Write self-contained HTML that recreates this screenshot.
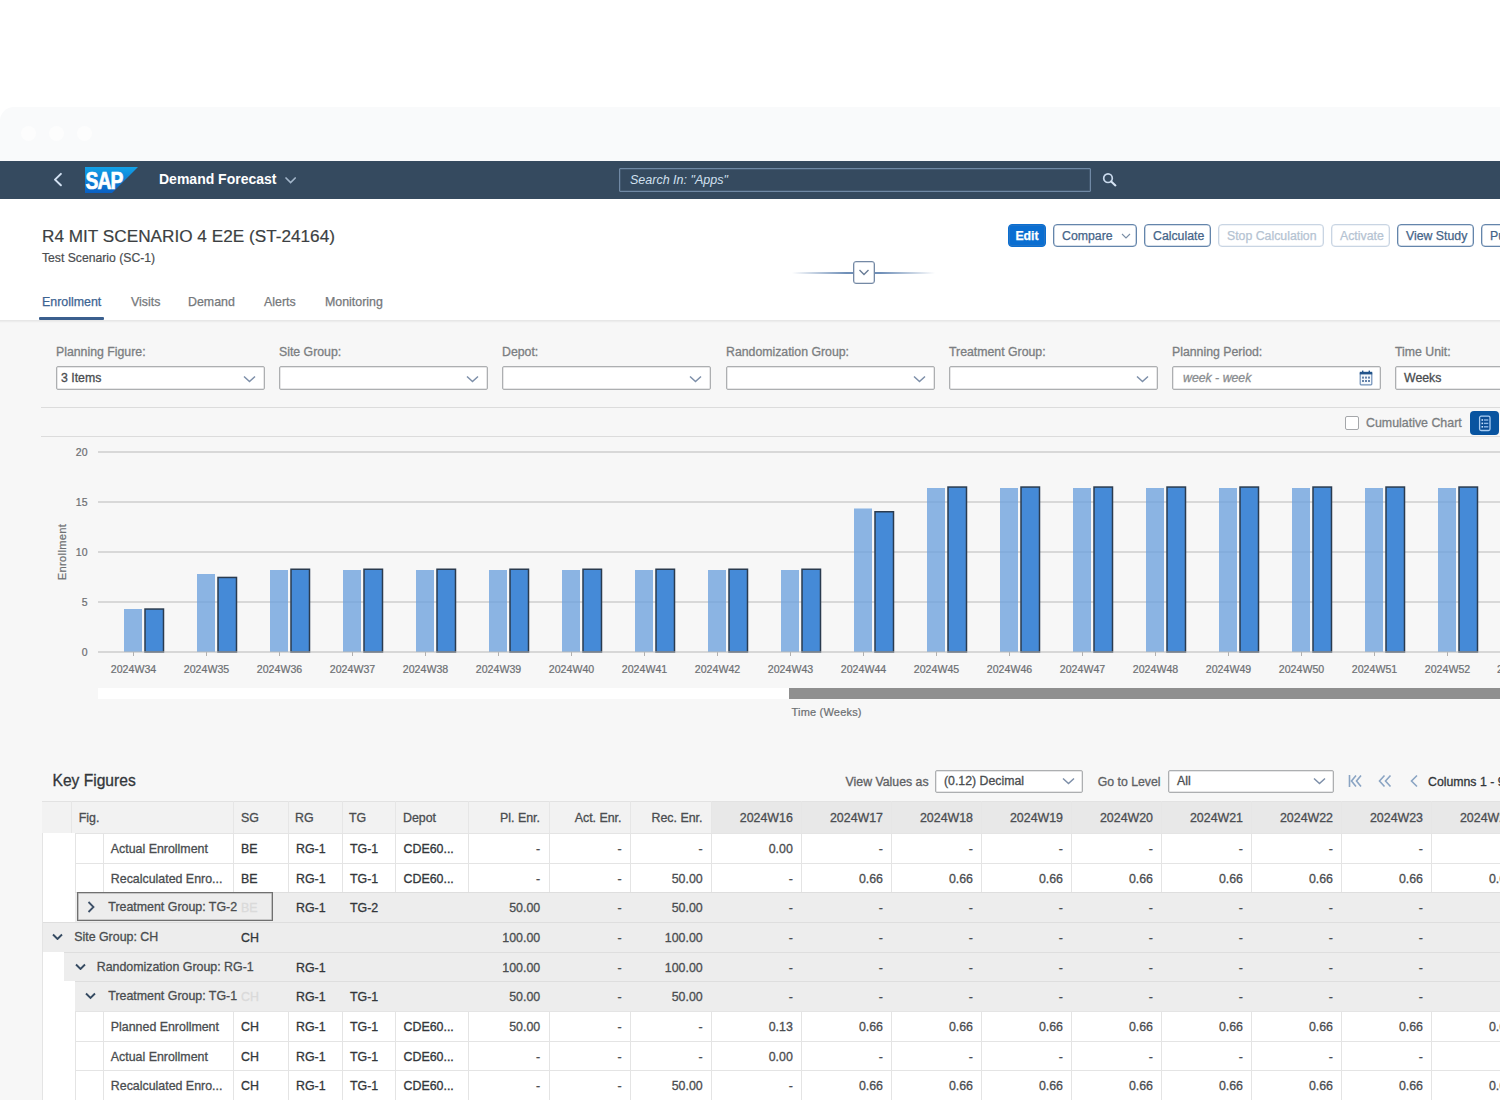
<!DOCTYPE html><html><head><meta charset="utf-8"><style>
*{box-sizing:border-box;margin:0;padding:0}
html,body{width:1500px;height:1100px;overflow:hidden;background:#fff;font-family:"Liberation Sans",sans-serif;color:#32363a}
.a{position:absolute;white-space:nowrap}
#chrome{position:absolute;left:0;top:107px;width:1520px;height:59px;background:#f9fafb;border-radius:14px 0 0 0}
.dot{position:absolute;top:126px;width:15px;height:15px;border-radius:50%;background:#fdfdfd}
#shell{position:absolute;left:0;top:161px;width:1500px;height:38px;background:#354a5f}
#hdr{position:absolute;left:0;top:199px;width:1500px;height:121px;background:#fff}
#body{position:absolute;left:0;top:320px;width:1500px;height:780px;background:#f7f7f7}
.btn{position:absolute;top:223.5px;height:23.5px;border:1px solid #6485ab;box-shadow:inset 0 0 0 0.6px rgba(100,133,171,.55);border-radius:4px;background:#fff;color:#456488;-webkit-text-stroke:0.25px currentColor;font-size:12.3px;line-height:23px;padding:0 0 0 8px;white-space:nowrap;overflow:hidden}
.btn.dis{border-color:#c9d5e3;box-shadow:inset 0 0 0 0.6px rgba(201,213,227,.55);color:#b5c3d2}
.lbl{position:absolute;top:345px;font-size:12.3px;color:#7b7e81;-webkit-text-stroke:0.3px currentColor;white-space:nowrap;line-height:14px}
.inp{position:absolute;top:366px;width:209px;height:23.5px;background:#fff;border:1px solid #adafb1;box-shadow:inset 0 0 0 0.5px rgba(173,175,177,.6);border-radius:2px;font-size:12.3px;line-height:22.5px;padding-left:4px;color:#4a4d50;-webkit-text-stroke:0.3px currentColor;white-space:nowrap;overflow:hidden}
.tab{position:absolute;top:294px;font-size:12.4px;color:#75787b;-webkit-text-stroke:0.25px currentColor;line-height:16px;white-space:nowrap}
.c{position:absolute;font-size:12.4px;line-height:16px;white-space:nowrap;color:#32363a}

</style></head><body>
<div id="chrome"></div>
<div class="dot" style="left:20.5px"></div>
<div class="dot" style="left:48.5px"></div>
<div class="dot" style="left:76.5px"></div>
<div id="shell"></div>
<svg class="a" style="left:50px;top:170px" width="16" height="20" viewBox="0 0 16 20"><path d="M10.9 3.9 L5 9.6 L10.9 15.3" fill="none" stroke="#d3e2f3" stroke-width="2" stroke-linecap="round" stroke-linejoin="round"/></svg>
<svg class="a" style="left:85px;top:167px" width="53" height="26" viewBox="0 0 53 26">
<defs><linearGradient id="sg" x1="0" y1="0" x2="0" y2="1"><stop offset="0" stop-color="#12a2e8"/><stop offset="1" stop-color="#0a5fc3"/></linearGradient></defs>
<path d="M0 0 H53 L27 26 H0 Z" fill="url(#sg)"/>
<text transform="translate(0.6,21.6) scale(0.84,1)" x="0" y="0" font-family="Liberation Sans" font-weight="bold" font-size="23" fill="#fff" stroke="#fff" stroke-width="0.7" letter-spacing="-1.1">SAP</text>
</svg>
<div class="a" style="left:159px;top:170px;font-size:14px;font-weight:bold;color:#fff;line-height:18px">Demand Forecast</div>
<svg class="a" style="left:284px;top:175px" width="14" height="10" viewBox="0 0 14 10"><path d="M2 3 L6.6 7.6 L11.2 3" fill="none" stroke="#a3b6ca" stroke-width="1.7" stroke-linecap="round"/></svg>
<div class="a" style="left:619px;top:168px;width:472px;height:24px;border:1px solid #7089a5;box-shadow:inset 0 0 0 0.5px rgba(112,137,165,.5);border-radius:1px"></div>
<div class="a" style="left:630px;top:172px;font-size:12.5px;font-style:italic;color:#d1e0ef;line-height:16px">Search In: "Apps"</div>
<svg class="a" style="left:1101px;top:172px" width="16" height="16" viewBox="0 0 16 16"><circle cx="7" cy="6.2" r="4.3" fill="none" stroke="#c9d9ec" stroke-width="1.7"/><path d="M10.2 9.4 L14.4 13.4" stroke="#d6e4f4" stroke-width="2.1" stroke-linecap="round"/></svg>
<div id="hdr"></div>
<div class="a" style="left:42px;top:226px;font-size:17.2px;color:#3c3f42;-webkit-text-stroke:0.2px currentColor;line-height:20px">R4 MIT SCENARIO 4 E2E (ST-24164)</div>
<div class="a" style="left:42px;top:251px;font-size:12.2px;color:#4a4d50;-webkit-text-stroke:0.2px currentColor;line-height:14px">Test Scenario (SC-1)</div>
<div class="btn" style="left:1008px;width:38px;background:#0a6ed1;border-color:#0a6ed1;color:#fff;font-weight:bold;padding:0;text-align:center">Edit</div>
<div class="btn" style="left:1053px;width:84px">Compare<svg style="position:absolute;left:67px;top:7px" width="10" height="8" viewBox="0 0 10 8"><path d="M1 2 L5 6 L9 2" fill="none" stroke="#7b8fa6" stroke-width="1.1"/></svg></div>
<div class="btn" style="left:1144px;width:67px">Calculate</div>
<div class="btn dis" style="left:1218px;width:106px">Stop Calculation</div>
<div class="btn dis" style="left:1331px;width:59px">Activate</div>
<div class="btn" style="left:1397px;width:77px">View Study</div>
<div class="btn" style="left:1481px;width:40px">Pu</div>
<div class="a" style="left:792px;top:272px;width:143px;height:1.5px;background:linear-gradient(90deg,rgba(106,140,180,0),#6f8fb8 38%,#6f8fb8 62%,rgba(106,140,180,0))"></div>
<div class="a" style="left:853px;top:261px;width:22px;height:23px;border:1px solid #7489a5;box-shadow:inset 0 0 0 0.6px rgba(116,137,165,.55);border-radius:3px;background:#fff"><svg style="position:absolute;left:4px;top:6px" width="12" height="9" viewBox="0 0 12 9"><path d="M1.5 2 L6 6.5 L10.5 2" fill="none" stroke="#6a7d97" stroke-width="1.4"/></svg></div>
<div class="tab" style="left:42px;color:#3d6492">Enrollment</div>
<div class="tab" style="left:131px">Visits</div>
<div class="tab" style="left:188px">Demand</div>
<div class="tab" style="left:264px">Alerts</div>
<div class="tab" style="left:325px">Monitoring</div>
<div class="a" style="left:39px;top:317px;width:65px;height:3px;background:#3b5f8e;border-radius:1px"></div>
<div id="body"></div>
<div class="a" style="left:0;top:320px;width:1500px;height:3px;background:linear-gradient(rgba(0,0,0,.08),rgba(0,0,0,0))"></div>
<div class="lbl" style="left:56px">Planning Figure:</div>
<div class="inp" style="left:56px">3 Items</div>
<svg class="a" style="left:243px;top:374.5px" width="13" height="8" viewBox="0 0 13 8"><path d="M1 1.5 L6.5 6.5 L12 1.5" fill="none" stroke="#7d8fa9" stroke-width="1.5"/></svg>
<div class="lbl" style="left:279px">Site Group:</div>
<div class="inp" style="left:279px"></div>
<svg class="a" style="left:466px;top:374.5px" width="13" height="8" viewBox="0 0 13 8"><path d="M1 1.5 L6.5 6.5 L12 1.5" fill="none" stroke="#7d8fa9" stroke-width="1.5"/></svg>
<div class="lbl" style="left:502px">Depot:</div>
<div class="inp" style="left:502px"></div>
<svg class="a" style="left:689px;top:374.5px" width="13" height="8" viewBox="0 0 13 8"><path d="M1 1.5 L6.5 6.5 L12 1.5" fill="none" stroke="#7d8fa9" stroke-width="1.5"/></svg>
<div class="lbl" style="left:726px">Randomization Group:</div>
<div class="inp" style="left:726px"></div>
<svg class="a" style="left:913px;top:374.5px" width="13" height="8" viewBox="0 0 13 8"><path d="M1 1.5 L6.5 6.5 L12 1.5" fill="none" stroke="#7d8fa9" stroke-width="1.5"/></svg>
<div class="lbl" style="left:949px">Treatment Group:</div>
<div class="inp" style="left:949px"></div>
<svg class="a" style="left:1136px;top:374.5px" width="13" height="8" viewBox="0 0 13 8"><path d="M1 1.5 L6.5 6.5 L12 1.5" fill="none" stroke="#7d8fa9" stroke-width="1.5"/></svg>
<div class="lbl" style="left:1172px">Planning Period:</div>
<div class="inp" style="left:1172px;font-style:italic;color:#8a8d90;padding-left:10px">week - week</div>
<svg class="a" style="left:1359px;top:370px" width="14" height="16" viewBox="0 0 14 16"><rect x="1.2" y="2.5" width="11.6" height="12.3" rx="0.8" fill="#f4f8fc" stroke="#6f90b8" stroke-width="1.2"/><rect x="0.8" y="1.8" width="12.4" height="2.6" fill="#22548b"/><rect x="3" y="0.6" width="1.4" height="2" fill="#22548b"/><rect x="9.6" y="0.6" width="1.4" height="2" fill="#22548b"/><g fill="#6583aa"><rect x="3" y="6.6" width="2" height="2"/><rect x="6" y="6.6" width="2" height="2"/><rect x="9" y="6.6" width="2" height="2"/><rect x="3" y="10" width="2" height="2"/><rect x="6" y="10" width="2" height="2"/><rect x="9" y="10" width="2" height="2"/></g></svg>
<div class="lbl" style="left:1395px">Time Unit:</div>
<div class="inp" style="left:1395px;width:140px;padding-left:8px">Weeks</div>
<div class="a" style="left:41px;top:407px;width:1460px;height:1px;background:#dcdcdc"></div>
<div class="a" style="left:41px;top:436px;width:1460px;height:1px;background:#dcdcdc"></div>
<div class="a" style="left:1345px;top:416px;width:14px;height:14px;border:1px solid #a5a7aa;border-radius:2px;background:#fff"></div>
<div class="a" style="left:1366px;top:415px;font-size:12.4px;color:#7b7e81;-webkit-text-stroke:0.3px currentColor;line-height:16px">Cumulative Chart</div>
<div class="a" style="left:1470px;top:411px;width:29px;height:23.5px;background:#0854a0;border-radius:4px"><svg style="position:absolute;left:8px;top:3.5px" width="14" height="17" viewBox="0 0 14 17"><rect x="1.6" y="1.2" width="10.4" height="14.3" rx="1.5" fill="#0a4c94" stroke="#a9cdf3" stroke-width="1.3"/><g fill="#cfe6ff"><rect x="3.5" y="4.2" width="1.6" height="1.6"/><rect x="3.5" y="7.6" width="1.6" height="1.6"/><rect x="3.5" y="11" width="1.6" height="1.6"/></g><g fill="#8fb9e8"><rect x="6" y="4.3" width="4.3" height="1.4"/><rect x="6" y="7.7" width="4.3" height="1.4"/><rect x="6" y="11.1" width="4.3" height="1.4"/></g></svg></div>
<svg class="a" style="left:0;top:440px" width="1500" height="290" viewBox="0 440 1500 290"><rect x="98" y="451.25" width="1402" height="1.5" fill="#cecece"/><text x="87.5" y="455.8" text-anchor="end" font-family="Liberation Sans" font-size="10.5" fill="#6d7073" stroke="#6d7073" stroke-width="0.22">20</text><rect x="98" y="501.25" width="1402" height="1.5" fill="#cecece"/><text x="87.5" y="505.8" text-anchor="end" font-family="Liberation Sans" font-size="10.5" fill="#6d7073" stroke="#6d7073" stroke-width="0.22">15</text><rect x="98" y="551.25" width="1402" height="1.5" fill="#cecece"/><text x="87.5" y="555.8" text-anchor="end" font-family="Liberation Sans" font-size="10.5" fill="#6d7073" stroke="#6d7073" stroke-width="0.22">10</text><rect x="98" y="601.25" width="1402" height="1.5" fill="#cecece"/><text x="87.5" y="605.8" text-anchor="end" font-family="Liberation Sans" font-size="10.5" fill="#6d7073" stroke="#6d7073" stroke-width="0.22">5</text><text x="87.5" y="655.8" text-anchor="end" font-family="Liberation Sans" font-size="10.5" fill="#6d7073" stroke="#6d7073" stroke-width="0.22">0</text><rect x="124" y="609.0" width="18" height="43.0" fill="#6fa3dd" fill-opacity="0.8"/><rect x="145" y="609.05" width="18.5" height="42.95" fill="#458ad7" stroke="#2a3b4f" stroke-width="1.5"/><rect x="133" y="652" width="1" height="4" fill="#b0b0b0"/><text x="133.5" y="673" text-anchor="middle" font-family="Liberation Sans" font-size="10.6" fill="#6d7073" stroke="#6d7073" stroke-width="0.22">2024W34</text><rect x="197" y="574.0" width="18" height="78.0" fill="#6fa3dd" fill-opacity="0.8"/><rect x="218" y="577.45" width="18.5" height="74.55" fill="#458ad7" stroke="#2a3b4f" stroke-width="1.5"/><rect x="206" y="652" width="1" height="4" fill="#b0b0b0"/><text x="206.5" y="673" text-anchor="middle" font-family="Liberation Sans" font-size="10.6" fill="#6d7073" stroke="#6d7073" stroke-width="0.22">2024W35</text><rect x="270" y="570.0" width="18" height="82.0" fill="#6fa3dd" fill-opacity="0.8"/><rect x="291" y="569.25" width="18.5" height="82.75" fill="#458ad7" stroke="#2a3b4f" stroke-width="1.5"/><rect x="279" y="652" width="1" height="4" fill="#b0b0b0"/><text x="279.5" y="673" text-anchor="middle" font-family="Liberation Sans" font-size="10.6" fill="#6d7073" stroke="#6d7073" stroke-width="0.22">2024W36</text><rect x="343" y="570.0" width="18" height="82.0" fill="#6fa3dd" fill-opacity="0.8"/><rect x="364" y="569.25" width="18.5" height="82.75" fill="#458ad7" stroke="#2a3b4f" stroke-width="1.5"/><rect x="352" y="652" width="1" height="4" fill="#b0b0b0"/><text x="352.5" y="673" text-anchor="middle" font-family="Liberation Sans" font-size="10.6" fill="#6d7073" stroke="#6d7073" stroke-width="0.22">2024W37</text><rect x="416" y="570.0" width="18" height="82.0" fill="#6fa3dd" fill-opacity="0.8"/><rect x="437" y="569.25" width="18.5" height="82.75" fill="#458ad7" stroke="#2a3b4f" stroke-width="1.5"/><rect x="425" y="652" width="1" height="4" fill="#b0b0b0"/><text x="425.5" y="673" text-anchor="middle" font-family="Liberation Sans" font-size="10.6" fill="#6d7073" stroke="#6d7073" stroke-width="0.22">2024W38</text><rect x="489" y="570.0" width="18" height="82.0" fill="#6fa3dd" fill-opacity="0.8"/><rect x="510" y="569.25" width="18.5" height="82.75" fill="#458ad7" stroke="#2a3b4f" stroke-width="1.5"/><rect x="498" y="652" width="1" height="4" fill="#b0b0b0"/><text x="498.5" y="673" text-anchor="middle" font-family="Liberation Sans" font-size="10.6" fill="#6d7073" stroke="#6d7073" stroke-width="0.22">2024W39</text><rect x="562" y="570.0" width="18" height="82.0" fill="#6fa3dd" fill-opacity="0.8"/><rect x="583" y="569.25" width="18.5" height="82.75" fill="#458ad7" stroke="#2a3b4f" stroke-width="1.5"/><rect x="571" y="652" width="1" height="4" fill="#b0b0b0"/><text x="571.5" y="673" text-anchor="middle" font-family="Liberation Sans" font-size="10.6" fill="#6d7073" stroke="#6d7073" stroke-width="0.22">2024W40</text><rect x="635" y="570.0" width="18" height="82.0" fill="#6fa3dd" fill-opacity="0.8"/><rect x="656" y="569.25" width="18.5" height="82.75" fill="#458ad7" stroke="#2a3b4f" stroke-width="1.5"/><rect x="644" y="652" width="1" height="4" fill="#b0b0b0"/><text x="644.5" y="673" text-anchor="middle" font-family="Liberation Sans" font-size="10.6" fill="#6d7073" stroke="#6d7073" stroke-width="0.22">2024W41</text><rect x="708" y="570.0" width="18" height="82.0" fill="#6fa3dd" fill-opacity="0.8"/><rect x="729" y="569.25" width="18.5" height="82.75" fill="#458ad7" stroke="#2a3b4f" stroke-width="1.5"/><rect x="717" y="652" width="1" height="4" fill="#b0b0b0"/><text x="717.5" y="673" text-anchor="middle" font-family="Liberation Sans" font-size="10.6" fill="#6d7073" stroke="#6d7073" stroke-width="0.22">2024W42</text><rect x="781" y="570.0" width="18" height="82.0" fill="#6fa3dd" fill-opacity="0.8"/><rect x="802" y="569.25" width="18.5" height="82.75" fill="#458ad7" stroke="#2a3b4f" stroke-width="1.5"/><rect x="790" y="652" width="1" height="4" fill="#b0b0b0"/><text x="790.5" y="673" text-anchor="middle" font-family="Liberation Sans" font-size="10.6" fill="#6d7073" stroke="#6d7073" stroke-width="0.22">2024W43</text><rect x="854" y="508.5" width="18" height="143.5" fill="#6fa3dd" fill-opacity="0.8"/><rect x="875" y="511.75" width="18.5" height="140.25" fill="#458ad7" stroke="#2a3b4f" stroke-width="1.5"/><rect x="863" y="652" width="1" height="4" fill="#b0b0b0"/><text x="863.5" y="673" text-anchor="middle" font-family="Liberation Sans" font-size="10.6" fill="#6d7073" stroke="#6d7073" stroke-width="0.22">2024W44</text><rect x="927" y="488.0" width="18" height="164.0" fill="#6fa3dd" fill-opacity="0.8"/><rect x="948" y="487.05" width="18.5" height="164.95" fill="#458ad7" stroke="#2a3b4f" stroke-width="1.5"/><rect x="936" y="652" width="1" height="4" fill="#b0b0b0"/><text x="936.5" y="673" text-anchor="middle" font-family="Liberation Sans" font-size="10.6" fill="#6d7073" stroke="#6d7073" stroke-width="0.22">2024W45</text><rect x="1000" y="488.0" width="18" height="164.0" fill="#6fa3dd" fill-opacity="0.8"/><rect x="1021" y="487.05" width="18.5" height="164.95" fill="#458ad7" stroke="#2a3b4f" stroke-width="1.5"/><rect x="1009" y="652" width="1" height="4" fill="#b0b0b0"/><text x="1009.5" y="673" text-anchor="middle" font-family="Liberation Sans" font-size="10.6" fill="#6d7073" stroke="#6d7073" stroke-width="0.22">2024W46</text><rect x="1073" y="488.0" width="18" height="164.0" fill="#6fa3dd" fill-opacity="0.8"/><rect x="1094" y="487.05" width="18.5" height="164.95" fill="#458ad7" stroke="#2a3b4f" stroke-width="1.5"/><rect x="1082" y="652" width="1" height="4" fill="#b0b0b0"/><text x="1082.5" y="673" text-anchor="middle" font-family="Liberation Sans" font-size="10.6" fill="#6d7073" stroke="#6d7073" stroke-width="0.22">2024W47</text><rect x="1146" y="488.0" width="18" height="164.0" fill="#6fa3dd" fill-opacity="0.8"/><rect x="1167" y="487.05" width="18.5" height="164.95" fill="#458ad7" stroke="#2a3b4f" stroke-width="1.5"/><rect x="1155" y="652" width="1" height="4" fill="#b0b0b0"/><text x="1155.5" y="673" text-anchor="middle" font-family="Liberation Sans" font-size="10.6" fill="#6d7073" stroke="#6d7073" stroke-width="0.22">2024W48</text><rect x="1219" y="488.0" width="18" height="164.0" fill="#6fa3dd" fill-opacity="0.8"/><rect x="1240" y="487.05" width="18.5" height="164.95" fill="#458ad7" stroke="#2a3b4f" stroke-width="1.5"/><rect x="1228" y="652" width="1" height="4" fill="#b0b0b0"/><text x="1228.5" y="673" text-anchor="middle" font-family="Liberation Sans" font-size="10.6" fill="#6d7073" stroke="#6d7073" stroke-width="0.22">2024W49</text><rect x="1292" y="488.0" width="18" height="164.0" fill="#6fa3dd" fill-opacity="0.8"/><rect x="1313" y="487.05" width="18.5" height="164.95" fill="#458ad7" stroke="#2a3b4f" stroke-width="1.5"/><rect x="1301" y="652" width="1" height="4" fill="#b0b0b0"/><text x="1301.5" y="673" text-anchor="middle" font-family="Liberation Sans" font-size="10.6" fill="#6d7073" stroke="#6d7073" stroke-width="0.22">2024W50</text><rect x="1365" y="488.0" width="18" height="164.0" fill="#6fa3dd" fill-opacity="0.8"/><rect x="1386" y="487.05" width="18.5" height="164.95" fill="#458ad7" stroke="#2a3b4f" stroke-width="1.5"/><rect x="1374" y="652" width="1" height="4" fill="#b0b0b0"/><text x="1374.5" y="673" text-anchor="middle" font-family="Liberation Sans" font-size="10.6" fill="#6d7073" stroke="#6d7073" stroke-width="0.22">2024W51</text><rect x="1438" y="488.0" width="18" height="164.0" fill="#6fa3dd" fill-opacity="0.8"/><rect x="1459" y="487.05" width="18.5" height="164.95" fill="#458ad7" stroke="#2a3b4f" stroke-width="1.5"/><rect x="1447" y="652" width="1" height="4" fill="#b0b0b0"/><text x="1447.5" y="673" text-anchor="middle" font-family="Liberation Sans" font-size="10.6" fill="#6d7073" stroke="#6d7073" stroke-width="0.22">2024W52</text><text x="1497" y="673" font-family="Liberation Sans" font-size="10.6" fill="#6d7073" stroke="#6d7073" stroke-width="0.22">2</text><rect x="98" y="651.5" width="1402" height="1" fill="#b8b8b8"/><rect x="98" y="688" width="1402" height="11" fill="#ffffff"/><rect x="789" y="688" width="711" height="11" fill="#8f8f8f"/><text x="791.5" y="716" font-family="Liberation Sans" font-size="11" fill="#6d7073" stroke="#6d7073" stroke-width="0.22" letter-spacing="0.2">Time (Weeks)</text><text transform="translate(66,552) rotate(-90)" text-anchor="middle" font-family="Liberation Sans" font-size="11.2" fill="#6d7073" stroke="#6d7073" stroke-width="0.22" letter-spacing="0.3">Enrollment</text></svg>
<div class="a" style="left:52.50px;top:773.09px;font-size:15.6px;line-height:16px;color:#32363a;-webkit-text-stroke:0.3px currentColor">Key Figures</div>
<div class="a" style="left:845.60px;top:773.74px;font-size:12.3px;line-height:16px;color:#5e6164;-webkit-text-stroke:0.3px currentColor">View Values as</div>
<div class="inp" style="left:935px;top:770px;width:148px;height:23px;padding-left:8px;line-height:21px">(0.12) Decimal</div>
<svg class="a" style="left:1062px;top:777px" width="13" height="8" viewBox="0 0 13 8"><path d="M1 1.5 L6.5 6.5 L12 1.5" fill="none" stroke="#7d8fa9" stroke-width="1.5"/></svg>
<div class="a" style="left:1097.70px;top:773.74px;font-size:12.3px;line-height:16px;color:#5e6164;-webkit-text-stroke:0.3px currentColor">Go to Level</div>
<div class="inp" style="left:1168px;top:770px;width:166px;height:23px;padding-left:8px;line-height:21px">All</div>
<svg class="a" style="left:1313px;top:777px" width="13" height="8" viewBox="0 0 13 8"><path d="M1 1.5 L6.5 6.5 L12 1.5" fill="none" stroke="#7d8fa9" stroke-width="1.5"/></svg>
<svg class="a" style="left:1348px;top:774px" width="16" height="14" viewBox="0 0 16 14"><path d="M1.5 1 V13 M8 1.5 L3.5 7 L8 12.5 M13 1.5 L8.5 7 L13 12.5" fill="none" stroke="#8aa4c3" stroke-width="1.6"/></svg>
<svg class="a" style="left:1377px;top:774px" width="16" height="14" viewBox="0 0 16 14"><path d="M7.5 1.5 L2.5 7 L7.5 12.5 M13.5 1.5 L8.5 7 L13.5 12.5" fill="none" stroke="#8aa4c3" stroke-width="1.6"/></svg>
<svg class="a" style="left:1408px;top:774px" width="12" height="14" viewBox="0 0 12 14"><path d="M9 1.5 L3.5 7 L9 12.5" fill="none" stroke="#8aa4c3" stroke-width="1.6"/></svg>
<div class="a" style="left:1428.00px;top:773.74px;font-size:12.3px;line-height:16px;color:#32363a;-webkit-text-stroke:0.3px currentColor">Columns 1 - 9</div>
<div class="a" style="left:41.7px;top:801px;width:1458.3px;height:31.5px;background:#f2f2f2;"></div>
<div class="a" style="left:711px;top:801px;width:790px;height:31.5px;background:#e8e8e8;"></div>
<div class="a" style="left:41.7px;top:801px;width:1458.3px;height:1px;background:#e2e2e2;"></div>
<div class="a" style="left:71px;top:801px;width:1px;height:31.5px;background:#e6e6e6;"></div>
<div class="a" style="left:232.5px;top:801px;width:1px;height:31.5px;background:#e6e6e6;"></div>
<div class="a" style="left:287.5px;top:801px;width:1px;height:31.5px;background:#e6e6e6;"></div>
<div class="a" style="left:341.5px;top:801px;width:1px;height:31.5px;background:#e6e6e6;"></div>
<div class="a" style="left:395px;top:801px;width:1px;height:31.5px;background:#e6e6e6;"></div>
<div class="a" style="left:467.5px;top:801px;width:1px;height:31.5px;background:#e6e6e6;"></div>
<div class="a" style="left:548.5px;top:801px;width:1px;height:31.5px;background:#e6e6e6;"></div>
<div class="a" style="left:630px;top:801px;width:1px;height:31.5px;background:#e6e6e6;"></div>
<div class="a" style="left:711px;top:801px;width:1px;height:31.5px;background:#e6e6e6;"></div>
<div class="a" style="left:800.8px;top:801px;width:1px;height:31.5px;background:#e6e6e6;"></div>
<div class="a" style="left:891px;top:801px;width:1px;height:31.5px;background:#e6e6e6;"></div>
<div class="a" style="left:981px;top:801px;width:1px;height:31.5px;background:#e6e6e6;"></div>
<div class="a" style="left:1071px;top:801px;width:1px;height:31.5px;background:#e6e6e6;"></div>
<div class="a" style="left:1161px;top:801px;width:1px;height:31.5px;background:#e6e6e6;"></div>
<div class="a" style="left:1251px;top:801px;width:1px;height:31.5px;background:#e6e6e6;"></div>
<div class="a" style="left:1341px;top:801px;width:1px;height:31.5px;background:#e6e6e6;"></div>
<div class="a" style="left:1431px;top:801px;width:1px;height:31.5px;background:#e6e6e6;"></div>
<div class="a" style="left:78.70px;top:810.20px;font-size:12.4px;line-height:16px;color:#4a4d50;-webkit-text-stroke:0.3px currentColor">Fig.</div>
<div class="a" style="left:241.00px;top:810.20px;font-size:12.4px;line-height:16px;color:#4a4d50;-webkit-text-stroke:0.3px currentColor">SG</div>
<div class="a" style="left:295.00px;top:810.20px;font-size:12.4px;line-height:16px;color:#4a4d50;-webkit-text-stroke:0.3px currentColor">RG</div>
<div class="a" style="left:349.00px;top:810.20px;font-size:12.4px;line-height:16px;color:#4a4d50;-webkit-text-stroke:0.3px currentColor">TG</div>
<div class="a" style="left:403.00px;top:810.20px;font-size:12.4px;line-height:16px;color:#4a4d50;-webkit-text-stroke:0.3px currentColor">Depot</div>
<div class="a" style="right:960.00px;top:810.20px;font-size:12.4px;line-height:16px;color:#4a4d50;-webkit-text-stroke:0.3px currentColor">Pl. Enr.</div>
<div class="a" style="right:878.50px;top:810.20px;font-size:12.4px;line-height:16px;color:#4a4d50;-webkit-text-stroke:0.3px currentColor">Act. Enr.</div>
<div class="a" style="right:797.50px;top:810.20px;font-size:12.4px;line-height:16px;color:#4a4d50;-webkit-text-stroke:0.3px currentColor">Rec. Enr.</div>
<div class="a" style="right:707.20px;top:810.20px;font-size:12.4px;line-height:16px;color:#4a4d50;-webkit-text-stroke:0.3px currentColor">2024W16</div>
<div class="a" style="right:617.00px;top:810.20px;font-size:12.4px;line-height:16px;color:#4a4d50;-webkit-text-stroke:0.3px currentColor">2024W17</div>
<div class="a" style="right:527.00px;top:810.20px;font-size:12.4px;line-height:16px;color:#4a4d50;-webkit-text-stroke:0.3px currentColor">2024W18</div>
<div class="a" style="right:437.00px;top:810.20px;font-size:12.4px;line-height:16px;color:#4a4d50;-webkit-text-stroke:0.3px currentColor">2024W19</div>
<div class="a" style="right:347.00px;top:810.20px;font-size:12.4px;line-height:16px;color:#4a4d50;-webkit-text-stroke:0.3px currentColor">2024W20</div>
<div class="a" style="right:257.00px;top:810.20px;font-size:12.4px;line-height:16px;color:#4a4d50;-webkit-text-stroke:0.3px currentColor">2024W21</div>
<div class="a" style="right:167.00px;top:810.20px;font-size:12.4px;line-height:16px;color:#4a4d50;-webkit-text-stroke:0.3px currentColor">2024W22</div>
<div class="a" style="right:77.00px;top:810.20px;font-size:12.4px;line-height:16px;color:#4a4d50;-webkit-text-stroke:0.3px currentColor">2024W23</div>
<div class="a" style="right:-13.00px;top:810.20px;font-size:12.4px;line-height:16px;color:#4a4d50;-webkit-text-stroke:0.3px currentColor">2024W24</div>
<div class="a" style="left:41.7px;top:832.5px;width:1458.3px;height:267.5px;background:#ffffff;"></div>
<div class="a" style="left:75px;top:832.5px;width:1425px;height:1px;background:#e4e4e4;"></div>
<div class="a" style="left:75px;top:832.5px;width:1px;height:30.0px;background:#e4e4e4;"></div>
<div class="a" style="left:103.3px;top:832.5px;width:1px;height:30.0px;background:#e4e4e4;"></div>
<div class="a" style="left:232.5px;top:832.5px;width:1px;height:30.0px;background:#e4e4e4;"></div>
<div class="a" style="left:287.5px;top:832.5px;width:1px;height:30.0px;background:#e4e4e4;"></div>
<div class="a" style="left:341.5px;top:832.5px;width:1px;height:30.0px;background:#e4e4e4;"></div>
<div class="a" style="left:395px;top:832.5px;width:1px;height:30.0px;background:#e4e4e4;"></div>
<div class="a" style="left:467.5px;top:832.5px;width:1px;height:30.0px;background:#e4e4e4;"></div>
<div class="a" style="left:548.5px;top:832.5px;width:1px;height:30.0px;background:#e4e4e4;"></div>
<div class="a" style="left:630px;top:832.5px;width:1px;height:30.0px;background:#e4e4e4;"></div>
<div class="a" style="left:711px;top:832.5px;width:1px;height:30.0px;background:#e4e4e4;"></div>
<div class="a" style="left:800.8px;top:832.5px;width:1px;height:30.0px;background:#e4e4e4;"></div>
<div class="a" style="left:891px;top:832.5px;width:1px;height:30.0px;background:#e4e4e4;"></div>
<div class="a" style="left:981px;top:832.5px;width:1px;height:30.0px;background:#e4e4e4;"></div>
<div class="a" style="left:1071px;top:832.5px;width:1px;height:30.0px;background:#e4e4e4;"></div>
<div class="a" style="left:1161px;top:832.5px;width:1px;height:30.0px;background:#e4e4e4;"></div>
<div class="a" style="left:1251px;top:832.5px;width:1px;height:30.0px;background:#e4e4e4;"></div>
<div class="a" style="left:1341px;top:832.5px;width:1px;height:30.0px;background:#e4e4e4;"></div>
<div class="a" style="left:1431px;top:832.5px;width:1px;height:30.0px;background:#e4e4e4;"></div>
<div class="a" style="left:110.80px;top:840.70px;font-size:12.4px;line-height:16px;color:#4a4d50;-webkit-text-stroke:0.3px currentColor">Actual Enrollment</div>
<div class="a" style="left:241.00px;top:840.70px;font-size:12.4px;line-height:16px;color:#32363a;-webkit-text-stroke:0.3px currentColor">BE</div>
<div class="a" style="left:296.00px;top:840.70px;font-size:12.4px;line-height:16px;color:#32363a;-webkit-text-stroke:0.3px currentColor">RG-1</div>
<div class="a" style="left:350.00px;top:840.70px;font-size:12.4px;line-height:16px;color:#32363a;-webkit-text-stroke:0.3px currentColor">TG-1</div>
<div class="a" style="left:403.50px;top:840.70px;font-size:12.4px;line-height:16px;color:#32363a;-webkit-text-stroke:0.3px currentColor">CDE60...</div>
<div class="a" style="right:959.80px;top:840.70px;font-size:12.4px;line-height:16px;color:#4a4d50;-webkit-text-stroke:0.3px currentColor">-</div>
<div class="a" style="right:878.30px;top:840.70px;font-size:12.4px;line-height:16px;color:#4a4d50;-webkit-text-stroke:0.3px currentColor">-</div>
<div class="a" style="right:797.30px;top:840.70px;font-size:12.4px;line-height:16px;color:#4a4d50;-webkit-text-stroke:0.3px currentColor">-</div>
<div class="a" style="right:707.20px;top:840.70px;font-size:12.4px;line-height:16px;color:#4a4d50;-webkit-text-stroke:0.3px currentColor">0.00</div>
<div class="a" style="right:617.00px;top:840.70px;font-size:12.4px;line-height:16px;color:#4a4d50;-webkit-text-stroke:0.3px currentColor">-</div>
<div class="a" style="right:527.00px;top:840.70px;font-size:12.4px;line-height:16px;color:#4a4d50;-webkit-text-stroke:0.3px currentColor">-</div>
<div class="a" style="right:437.00px;top:840.70px;font-size:12.4px;line-height:16px;color:#4a4d50;-webkit-text-stroke:0.3px currentColor">-</div>
<div class="a" style="right:347.00px;top:840.70px;font-size:12.4px;line-height:16px;color:#4a4d50;-webkit-text-stroke:0.3px currentColor">-</div>
<div class="a" style="right:257.00px;top:840.70px;font-size:12.4px;line-height:16px;color:#4a4d50;-webkit-text-stroke:0.3px currentColor">-</div>
<div class="a" style="right:167.00px;top:840.70px;font-size:12.4px;line-height:16px;color:#4a4d50;-webkit-text-stroke:0.3px currentColor">-</div>
<div class="a" style="right:77.00px;top:840.70px;font-size:12.4px;line-height:16px;color:#4a4d50;-webkit-text-stroke:0.3px currentColor">-</div>
<div class="a" style="left:75px;top:862.5px;width:1425px;height:1px;background:#e4e4e4;"></div>
<div class="a" style="left:75px;top:862.5px;width:1px;height:29.5px;background:#e4e4e4;"></div>
<div class="a" style="left:103.3px;top:862.5px;width:1px;height:29.5px;background:#e4e4e4;"></div>
<div class="a" style="left:232.5px;top:862.5px;width:1px;height:29.5px;background:#e4e4e4;"></div>
<div class="a" style="left:287.5px;top:862.5px;width:1px;height:29.5px;background:#e4e4e4;"></div>
<div class="a" style="left:341.5px;top:862.5px;width:1px;height:29.5px;background:#e4e4e4;"></div>
<div class="a" style="left:395px;top:862.5px;width:1px;height:29.5px;background:#e4e4e4;"></div>
<div class="a" style="left:467.5px;top:862.5px;width:1px;height:29.5px;background:#e4e4e4;"></div>
<div class="a" style="left:548.5px;top:862.5px;width:1px;height:29.5px;background:#e4e4e4;"></div>
<div class="a" style="left:630px;top:862.5px;width:1px;height:29.5px;background:#e4e4e4;"></div>
<div class="a" style="left:711px;top:862.5px;width:1px;height:29.5px;background:#e4e4e4;"></div>
<div class="a" style="left:800.8px;top:862.5px;width:1px;height:29.5px;background:#e4e4e4;"></div>
<div class="a" style="left:891px;top:862.5px;width:1px;height:29.5px;background:#e4e4e4;"></div>
<div class="a" style="left:981px;top:862.5px;width:1px;height:29.5px;background:#e4e4e4;"></div>
<div class="a" style="left:1071px;top:862.5px;width:1px;height:29.5px;background:#e4e4e4;"></div>
<div class="a" style="left:1161px;top:862.5px;width:1px;height:29.5px;background:#e4e4e4;"></div>
<div class="a" style="left:1251px;top:862.5px;width:1px;height:29.5px;background:#e4e4e4;"></div>
<div class="a" style="left:1341px;top:862.5px;width:1px;height:29.5px;background:#e4e4e4;"></div>
<div class="a" style="left:1431px;top:862.5px;width:1px;height:29.5px;background:#e4e4e4;"></div>
<div class="a" style="left:110.80px;top:870.70px;font-size:12.4px;line-height:16px;color:#4a4d50;-webkit-text-stroke:0.3px currentColor">Recalculated Enro...</div>
<div class="a" style="left:241.00px;top:870.70px;font-size:12.4px;line-height:16px;color:#32363a;-webkit-text-stroke:0.3px currentColor">BE</div>
<div class="a" style="left:296.00px;top:870.70px;font-size:12.4px;line-height:16px;color:#32363a;-webkit-text-stroke:0.3px currentColor">RG-1</div>
<div class="a" style="left:350.00px;top:870.70px;font-size:12.4px;line-height:16px;color:#32363a;-webkit-text-stroke:0.3px currentColor">TG-1</div>
<div class="a" style="left:403.50px;top:870.70px;font-size:12.4px;line-height:16px;color:#32363a;-webkit-text-stroke:0.3px currentColor">CDE60...</div>
<div class="a" style="right:959.80px;top:870.70px;font-size:12.4px;line-height:16px;color:#4a4d50;-webkit-text-stroke:0.3px currentColor">-</div>
<div class="a" style="right:878.30px;top:870.70px;font-size:12.4px;line-height:16px;color:#4a4d50;-webkit-text-stroke:0.3px currentColor">-</div>
<div class="a" style="right:797.30px;top:870.70px;font-size:12.4px;line-height:16px;color:#4a4d50;-webkit-text-stroke:0.3px currentColor">50.00</div>
<div class="a" style="right:707.20px;top:870.70px;font-size:12.4px;line-height:16px;color:#4a4d50;-webkit-text-stroke:0.3px currentColor">-</div>
<div class="a" style="right:617.00px;top:870.70px;font-size:12.4px;line-height:16px;color:#4a4d50;-webkit-text-stroke:0.3px currentColor">0.66</div>
<div class="a" style="right:527.00px;top:870.70px;font-size:12.4px;line-height:16px;color:#4a4d50;-webkit-text-stroke:0.3px currentColor">0.66</div>
<div class="a" style="right:437.00px;top:870.70px;font-size:12.4px;line-height:16px;color:#4a4d50;-webkit-text-stroke:0.3px currentColor">0.66</div>
<div class="a" style="right:347.00px;top:870.70px;font-size:12.4px;line-height:16px;color:#4a4d50;-webkit-text-stroke:0.3px currentColor">0.66</div>
<div class="a" style="right:257.00px;top:870.70px;font-size:12.4px;line-height:16px;color:#4a4d50;-webkit-text-stroke:0.3px currentColor">0.66</div>
<div class="a" style="right:167.00px;top:870.70px;font-size:12.4px;line-height:16px;color:#4a4d50;-webkit-text-stroke:0.3px currentColor">0.66</div>
<div class="a" style="right:77.00px;top:870.70px;font-size:12.4px;line-height:16px;color:#4a4d50;-webkit-text-stroke:0.3px currentColor">0.66</div>
<div class="a" style="right:-13.00px;top:870.70px;font-size:12.4px;line-height:16px;color:#4a4d50;-webkit-text-stroke:0.3px currentColor">0.66</div>
<div class="a" style="left:75px;top:892px;width:1425px;height:29.5px;background:#ededed;"></div>
<div class="a" style="left:75px;top:892px;width:1425px;height:1px;background:#dedede;"></div>
<svg class="a" style="left:87px;top:900.6px" width="8" height="12" viewBox="0 0 8 12"><path d="M1.5 1 L6.5 6 L1.5 11" fill="none" stroke="#3d5068" stroke-width="1.8"/></svg>
<div class="a" style="left:108.30px;top:899.40px;font-size:12.4px;line-height:16px;color:#4a4d50;-webkit-text-stroke:0.3px currentColor">Treatment Group: TG-2</div>
<div class="a" style="left:241.00px;top:900.20px;font-size:12.4px;line-height:16px;color:#dadada;-webkit-text-stroke:0.3px currentColor">BE</div>
<div class="a" style="left:296.00px;top:900.20px;font-size:12.4px;line-height:16px;color:#32363a;-webkit-text-stroke:0.3px currentColor">RG-1</div>
<div class="a" style="left:350.00px;top:900.20px;font-size:12.4px;line-height:16px;color:#32363a;-webkit-text-stroke:0.3px currentColor">TG-2</div>
<div class="a" style="right:959.80px;top:900.20px;font-size:12.4px;line-height:16px;color:#4a4d50;-webkit-text-stroke:0.3px currentColor">50.00</div>
<div class="a" style="right:878.30px;top:900.20px;font-size:12.4px;line-height:16px;color:#4a4d50;-webkit-text-stroke:0.3px currentColor">-</div>
<div class="a" style="right:797.30px;top:900.20px;font-size:12.4px;line-height:16px;color:#4a4d50;-webkit-text-stroke:0.3px currentColor">50.00</div>
<div class="a" style="right:707.20px;top:900.20px;font-size:12.4px;line-height:16px;color:#4a4d50;-webkit-text-stroke:0.3px currentColor">-</div>
<div class="a" style="right:617.00px;top:900.20px;font-size:12.4px;line-height:16px;color:#4a4d50;-webkit-text-stroke:0.3px currentColor">-</div>
<div class="a" style="right:527.00px;top:900.20px;font-size:12.4px;line-height:16px;color:#4a4d50;-webkit-text-stroke:0.3px currentColor">-</div>
<div class="a" style="right:437.00px;top:900.20px;font-size:12.4px;line-height:16px;color:#4a4d50;-webkit-text-stroke:0.3px currentColor">-</div>
<div class="a" style="right:347.00px;top:900.20px;font-size:12.4px;line-height:16px;color:#4a4d50;-webkit-text-stroke:0.3px currentColor">-</div>
<div class="a" style="right:257.00px;top:900.20px;font-size:12.4px;line-height:16px;color:#4a4d50;-webkit-text-stroke:0.3px currentColor">-</div>
<div class="a" style="right:167.00px;top:900.20px;font-size:12.4px;line-height:16px;color:#4a4d50;-webkit-text-stroke:0.3px currentColor">-</div>
<div class="a" style="right:77.00px;top:900.20px;font-size:12.4px;line-height:16px;color:#4a4d50;-webkit-text-stroke:0.3px currentColor">-</div>
<div class="a" style="left:41.7px;top:921.5px;width:1458.3px;height:30.0px;background:#ededed;"></div>
<div class="a" style="left:41.7px;top:921.5px;width:1458.3px;height:1px;background:#dedede;"></div>
<svg class="a" style="left:52px;top:932.5px" width="11" height="7.5" viewBox="0 0 11 7.5"><path d="M1 1.5 L5.5 6.0 L10 1.5" fill="none" stroke="#364b62" stroke-width="1.9"/></svg>
<div class="a" style="left:74.20px;top:928.90px;font-size:12.4px;line-height:16px;color:#4a4d50;-webkit-text-stroke:0.3px currentColor">Site Group: CH</div>
<div class="a" style="left:241.00px;top:929.70px;font-size:12.4px;line-height:16px;color:#32363a;-webkit-text-stroke:0.3px currentColor">CH</div>
<div class="a" style="right:959.80px;top:929.70px;font-size:12.4px;line-height:16px;color:#4a4d50;-webkit-text-stroke:0.3px currentColor">100.00</div>
<div class="a" style="right:878.30px;top:929.70px;font-size:12.4px;line-height:16px;color:#4a4d50;-webkit-text-stroke:0.3px currentColor">-</div>
<div class="a" style="right:797.30px;top:929.70px;font-size:12.4px;line-height:16px;color:#4a4d50;-webkit-text-stroke:0.3px currentColor">100.00</div>
<div class="a" style="right:707.20px;top:929.70px;font-size:12.4px;line-height:16px;color:#4a4d50;-webkit-text-stroke:0.3px currentColor">-</div>
<div class="a" style="right:617.00px;top:929.70px;font-size:12.4px;line-height:16px;color:#4a4d50;-webkit-text-stroke:0.3px currentColor">-</div>
<div class="a" style="right:527.00px;top:929.70px;font-size:12.4px;line-height:16px;color:#4a4d50;-webkit-text-stroke:0.3px currentColor">-</div>
<div class="a" style="right:437.00px;top:929.70px;font-size:12.4px;line-height:16px;color:#4a4d50;-webkit-text-stroke:0.3px currentColor">-</div>
<div class="a" style="right:347.00px;top:929.70px;font-size:12.4px;line-height:16px;color:#4a4d50;-webkit-text-stroke:0.3px currentColor">-</div>
<div class="a" style="right:257.00px;top:929.70px;font-size:12.4px;line-height:16px;color:#4a4d50;-webkit-text-stroke:0.3px currentColor">-</div>
<div class="a" style="right:167.00px;top:929.70px;font-size:12.4px;line-height:16px;color:#4a4d50;-webkit-text-stroke:0.3px currentColor">-</div>
<div class="a" style="right:77.00px;top:929.70px;font-size:12.4px;line-height:16px;color:#4a4d50;-webkit-text-stroke:0.3px currentColor">-</div>
<div class="a" style="left:64.2px;top:951.5px;width:1435.8px;height:29.5px;background:#ededed;"></div>
<div class="a" style="left:64.2px;top:951.5px;width:1435.8px;height:1px;background:#dedede;"></div>
<svg class="a" style="left:74.5px;top:962.5px" width="11" height="7.5" viewBox="0 0 11 7.5"><path d="M1 1.5 L5.5 6.0 L10 1.5" fill="none" stroke="#364b62" stroke-width="1.9"/></svg>
<div class="a" style="left:96.70px;top:958.90px;font-size:12.4px;line-height:16px;color:#4a4d50;-webkit-text-stroke:0.3px currentColor">Randomization Group: RG-1</div>
<div class="a" style="left:296.00px;top:959.70px;font-size:12.4px;line-height:16px;color:#32363a;-webkit-text-stroke:0.3px currentColor">RG-1</div>
<div class="a" style="right:959.80px;top:959.70px;font-size:12.4px;line-height:16px;color:#4a4d50;-webkit-text-stroke:0.3px currentColor">100.00</div>
<div class="a" style="right:878.30px;top:959.70px;font-size:12.4px;line-height:16px;color:#4a4d50;-webkit-text-stroke:0.3px currentColor">-</div>
<div class="a" style="right:797.30px;top:959.70px;font-size:12.4px;line-height:16px;color:#4a4d50;-webkit-text-stroke:0.3px currentColor">100.00</div>
<div class="a" style="right:707.20px;top:959.70px;font-size:12.4px;line-height:16px;color:#4a4d50;-webkit-text-stroke:0.3px currentColor">-</div>
<div class="a" style="right:617.00px;top:959.70px;font-size:12.4px;line-height:16px;color:#4a4d50;-webkit-text-stroke:0.3px currentColor">-</div>
<div class="a" style="right:527.00px;top:959.70px;font-size:12.4px;line-height:16px;color:#4a4d50;-webkit-text-stroke:0.3px currentColor">-</div>
<div class="a" style="right:437.00px;top:959.70px;font-size:12.4px;line-height:16px;color:#4a4d50;-webkit-text-stroke:0.3px currentColor">-</div>
<div class="a" style="right:347.00px;top:959.70px;font-size:12.4px;line-height:16px;color:#4a4d50;-webkit-text-stroke:0.3px currentColor">-</div>
<div class="a" style="right:257.00px;top:959.70px;font-size:12.4px;line-height:16px;color:#4a4d50;-webkit-text-stroke:0.3px currentColor">-</div>
<div class="a" style="right:167.00px;top:959.70px;font-size:12.4px;line-height:16px;color:#4a4d50;-webkit-text-stroke:0.3px currentColor">-</div>
<div class="a" style="right:77.00px;top:959.70px;font-size:12.4px;line-height:16px;color:#4a4d50;-webkit-text-stroke:0.3px currentColor">-</div>
<div class="a" style="left:75px;top:981px;width:1425px;height:30px;background:#ededed;"></div>
<div class="a" style="left:75px;top:981px;width:1425px;height:1px;background:#dedede;"></div>
<svg class="a" style="left:85.3px;top:992px" width="11" height="7.5" viewBox="0 0 11 7.5"><path d="M1 1.5 L5.5 6.0 L10 1.5" fill="none" stroke="#364b62" stroke-width="1.9"/></svg>
<div class="a" style="left:108.30px;top:988.40px;font-size:12.4px;line-height:16px;color:#4a4d50;-webkit-text-stroke:0.3px currentColor">Treatment Group: TG-1</div>
<div class="a" style="left:241.00px;top:989.20px;font-size:12.4px;line-height:16px;color:#dadada;-webkit-text-stroke:0.3px currentColor">CH</div>
<div class="a" style="left:296.00px;top:989.20px;font-size:12.4px;line-height:16px;color:#32363a;-webkit-text-stroke:0.3px currentColor">RG-1</div>
<div class="a" style="left:350.00px;top:989.20px;font-size:12.4px;line-height:16px;color:#32363a;-webkit-text-stroke:0.3px currentColor">TG-1</div>
<div class="a" style="right:959.80px;top:989.20px;font-size:12.4px;line-height:16px;color:#4a4d50;-webkit-text-stroke:0.3px currentColor">50.00</div>
<div class="a" style="right:878.30px;top:989.20px;font-size:12.4px;line-height:16px;color:#4a4d50;-webkit-text-stroke:0.3px currentColor">-</div>
<div class="a" style="right:797.30px;top:989.20px;font-size:12.4px;line-height:16px;color:#4a4d50;-webkit-text-stroke:0.3px currentColor">50.00</div>
<div class="a" style="right:707.20px;top:989.20px;font-size:12.4px;line-height:16px;color:#4a4d50;-webkit-text-stroke:0.3px currentColor">-</div>
<div class="a" style="right:617.00px;top:989.20px;font-size:12.4px;line-height:16px;color:#4a4d50;-webkit-text-stroke:0.3px currentColor">-</div>
<div class="a" style="right:527.00px;top:989.20px;font-size:12.4px;line-height:16px;color:#4a4d50;-webkit-text-stroke:0.3px currentColor">-</div>
<div class="a" style="right:437.00px;top:989.20px;font-size:12.4px;line-height:16px;color:#4a4d50;-webkit-text-stroke:0.3px currentColor">-</div>
<div class="a" style="right:347.00px;top:989.20px;font-size:12.4px;line-height:16px;color:#4a4d50;-webkit-text-stroke:0.3px currentColor">-</div>
<div class="a" style="right:257.00px;top:989.20px;font-size:12.4px;line-height:16px;color:#4a4d50;-webkit-text-stroke:0.3px currentColor">-</div>
<div class="a" style="right:167.00px;top:989.20px;font-size:12.4px;line-height:16px;color:#4a4d50;-webkit-text-stroke:0.3px currentColor">-</div>
<div class="a" style="right:77.00px;top:989.20px;font-size:12.4px;line-height:16px;color:#4a4d50;-webkit-text-stroke:0.3px currentColor">-</div>
<div class="a" style="left:75px;top:1011px;width:1425px;height:1px;background:#e4e4e4;"></div>
<div class="a" style="left:75px;top:1011px;width:1px;height:29.5px;background:#e4e4e4;"></div>
<div class="a" style="left:103.3px;top:1011px;width:1px;height:29.5px;background:#e4e4e4;"></div>
<div class="a" style="left:232.5px;top:1011px;width:1px;height:29.5px;background:#e4e4e4;"></div>
<div class="a" style="left:287.5px;top:1011px;width:1px;height:29.5px;background:#e4e4e4;"></div>
<div class="a" style="left:341.5px;top:1011px;width:1px;height:29.5px;background:#e4e4e4;"></div>
<div class="a" style="left:395px;top:1011px;width:1px;height:29.5px;background:#e4e4e4;"></div>
<div class="a" style="left:467.5px;top:1011px;width:1px;height:29.5px;background:#e4e4e4;"></div>
<div class="a" style="left:548.5px;top:1011px;width:1px;height:29.5px;background:#e4e4e4;"></div>
<div class="a" style="left:630px;top:1011px;width:1px;height:29.5px;background:#e4e4e4;"></div>
<div class="a" style="left:711px;top:1011px;width:1px;height:29.5px;background:#e4e4e4;"></div>
<div class="a" style="left:800.8px;top:1011px;width:1px;height:29.5px;background:#e4e4e4;"></div>
<div class="a" style="left:891px;top:1011px;width:1px;height:29.5px;background:#e4e4e4;"></div>
<div class="a" style="left:981px;top:1011px;width:1px;height:29.5px;background:#e4e4e4;"></div>
<div class="a" style="left:1071px;top:1011px;width:1px;height:29.5px;background:#e4e4e4;"></div>
<div class="a" style="left:1161px;top:1011px;width:1px;height:29.5px;background:#e4e4e4;"></div>
<div class="a" style="left:1251px;top:1011px;width:1px;height:29.5px;background:#e4e4e4;"></div>
<div class="a" style="left:1341px;top:1011px;width:1px;height:29.5px;background:#e4e4e4;"></div>
<div class="a" style="left:1431px;top:1011px;width:1px;height:29.5px;background:#e4e4e4;"></div>
<div class="a" style="left:110.80px;top:1019.20px;font-size:12.4px;line-height:16px;color:#4a4d50;-webkit-text-stroke:0.3px currentColor">Planned Enrollment</div>
<div class="a" style="left:241.00px;top:1019.20px;font-size:12.4px;line-height:16px;color:#32363a;-webkit-text-stroke:0.3px currentColor">CH</div>
<div class="a" style="left:296.00px;top:1019.20px;font-size:12.4px;line-height:16px;color:#32363a;-webkit-text-stroke:0.3px currentColor">RG-1</div>
<div class="a" style="left:350.00px;top:1019.20px;font-size:12.4px;line-height:16px;color:#32363a;-webkit-text-stroke:0.3px currentColor">TG-1</div>
<div class="a" style="left:403.50px;top:1019.20px;font-size:12.4px;line-height:16px;color:#32363a;-webkit-text-stroke:0.3px currentColor">CDE60...</div>
<div class="a" style="right:959.80px;top:1019.20px;font-size:12.4px;line-height:16px;color:#4a4d50;-webkit-text-stroke:0.3px currentColor">50.00</div>
<div class="a" style="right:878.30px;top:1019.20px;font-size:12.4px;line-height:16px;color:#4a4d50;-webkit-text-stroke:0.3px currentColor">-</div>
<div class="a" style="right:797.30px;top:1019.20px;font-size:12.4px;line-height:16px;color:#4a4d50;-webkit-text-stroke:0.3px currentColor">-</div>
<div class="a" style="right:707.20px;top:1019.20px;font-size:12.4px;line-height:16px;color:#4a4d50;-webkit-text-stroke:0.3px currentColor">0.13</div>
<div class="a" style="right:617.00px;top:1019.20px;font-size:12.4px;line-height:16px;color:#4a4d50;-webkit-text-stroke:0.3px currentColor">0.66</div>
<div class="a" style="right:527.00px;top:1019.20px;font-size:12.4px;line-height:16px;color:#4a4d50;-webkit-text-stroke:0.3px currentColor">0.66</div>
<div class="a" style="right:437.00px;top:1019.20px;font-size:12.4px;line-height:16px;color:#4a4d50;-webkit-text-stroke:0.3px currentColor">0.66</div>
<div class="a" style="right:347.00px;top:1019.20px;font-size:12.4px;line-height:16px;color:#4a4d50;-webkit-text-stroke:0.3px currentColor">0.66</div>
<div class="a" style="right:257.00px;top:1019.20px;font-size:12.4px;line-height:16px;color:#4a4d50;-webkit-text-stroke:0.3px currentColor">0.66</div>
<div class="a" style="right:167.00px;top:1019.20px;font-size:12.4px;line-height:16px;color:#4a4d50;-webkit-text-stroke:0.3px currentColor">0.66</div>
<div class="a" style="right:77.00px;top:1019.20px;font-size:12.4px;line-height:16px;color:#4a4d50;-webkit-text-stroke:0.3px currentColor">0.66</div>
<div class="a" style="right:-13.00px;top:1019.20px;font-size:12.4px;line-height:16px;color:#4a4d50;-webkit-text-stroke:0.3px currentColor">0.66</div>
<div class="a" style="left:75px;top:1040.5px;width:1425px;height:1px;background:#e4e4e4;"></div>
<div class="a" style="left:75px;top:1040.5px;width:1px;height:29.5px;background:#e4e4e4;"></div>
<div class="a" style="left:103.3px;top:1040.5px;width:1px;height:29.5px;background:#e4e4e4;"></div>
<div class="a" style="left:232.5px;top:1040.5px;width:1px;height:29.5px;background:#e4e4e4;"></div>
<div class="a" style="left:287.5px;top:1040.5px;width:1px;height:29.5px;background:#e4e4e4;"></div>
<div class="a" style="left:341.5px;top:1040.5px;width:1px;height:29.5px;background:#e4e4e4;"></div>
<div class="a" style="left:395px;top:1040.5px;width:1px;height:29.5px;background:#e4e4e4;"></div>
<div class="a" style="left:467.5px;top:1040.5px;width:1px;height:29.5px;background:#e4e4e4;"></div>
<div class="a" style="left:548.5px;top:1040.5px;width:1px;height:29.5px;background:#e4e4e4;"></div>
<div class="a" style="left:630px;top:1040.5px;width:1px;height:29.5px;background:#e4e4e4;"></div>
<div class="a" style="left:711px;top:1040.5px;width:1px;height:29.5px;background:#e4e4e4;"></div>
<div class="a" style="left:800.8px;top:1040.5px;width:1px;height:29.5px;background:#e4e4e4;"></div>
<div class="a" style="left:891px;top:1040.5px;width:1px;height:29.5px;background:#e4e4e4;"></div>
<div class="a" style="left:981px;top:1040.5px;width:1px;height:29.5px;background:#e4e4e4;"></div>
<div class="a" style="left:1071px;top:1040.5px;width:1px;height:29.5px;background:#e4e4e4;"></div>
<div class="a" style="left:1161px;top:1040.5px;width:1px;height:29.5px;background:#e4e4e4;"></div>
<div class="a" style="left:1251px;top:1040.5px;width:1px;height:29.5px;background:#e4e4e4;"></div>
<div class="a" style="left:1341px;top:1040.5px;width:1px;height:29.5px;background:#e4e4e4;"></div>
<div class="a" style="left:1431px;top:1040.5px;width:1px;height:29.5px;background:#e4e4e4;"></div>
<div class="a" style="left:110.80px;top:1048.70px;font-size:12.4px;line-height:16px;color:#4a4d50;-webkit-text-stroke:0.3px currentColor">Actual Enrollment</div>
<div class="a" style="left:241.00px;top:1048.70px;font-size:12.4px;line-height:16px;color:#32363a;-webkit-text-stroke:0.3px currentColor">CH</div>
<div class="a" style="left:296.00px;top:1048.70px;font-size:12.4px;line-height:16px;color:#32363a;-webkit-text-stroke:0.3px currentColor">RG-1</div>
<div class="a" style="left:350.00px;top:1048.70px;font-size:12.4px;line-height:16px;color:#32363a;-webkit-text-stroke:0.3px currentColor">TG-1</div>
<div class="a" style="left:403.50px;top:1048.70px;font-size:12.4px;line-height:16px;color:#32363a;-webkit-text-stroke:0.3px currentColor">CDE60...</div>
<div class="a" style="right:959.80px;top:1048.70px;font-size:12.4px;line-height:16px;color:#4a4d50;-webkit-text-stroke:0.3px currentColor">-</div>
<div class="a" style="right:878.30px;top:1048.70px;font-size:12.4px;line-height:16px;color:#4a4d50;-webkit-text-stroke:0.3px currentColor">-</div>
<div class="a" style="right:797.30px;top:1048.70px;font-size:12.4px;line-height:16px;color:#4a4d50;-webkit-text-stroke:0.3px currentColor">-</div>
<div class="a" style="right:707.20px;top:1048.70px;font-size:12.4px;line-height:16px;color:#4a4d50;-webkit-text-stroke:0.3px currentColor">0.00</div>
<div class="a" style="right:617.00px;top:1048.70px;font-size:12.4px;line-height:16px;color:#4a4d50;-webkit-text-stroke:0.3px currentColor">-</div>
<div class="a" style="right:527.00px;top:1048.70px;font-size:12.4px;line-height:16px;color:#4a4d50;-webkit-text-stroke:0.3px currentColor">-</div>
<div class="a" style="right:437.00px;top:1048.70px;font-size:12.4px;line-height:16px;color:#4a4d50;-webkit-text-stroke:0.3px currentColor">-</div>
<div class="a" style="right:347.00px;top:1048.70px;font-size:12.4px;line-height:16px;color:#4a4d50;-webkit-text-stroke:0.3px currentColor">-</div>
<div class="a" style="right:257.00px;top:1048.70px;font-size:12.4px;line-height:16px;color:#4a4d50;-webkit-text-stroke:0.3px currentColor">-</div>
<div class="a" style="right:167.00px;top:1048.70px;font-size:12.4px;line-height:16px;color:#4a4d50;-webkit-text-stroke:0.3px currentColor">-</div>
<div class="a" style="right:77.00px;top:1048.70px;font-size:12.4px;line-height:16px;color:#4a4d50;-webkit-text-stroke:0.3px currentColor">-</div>
<div class="a" style="left:75px;top:1070px;width:1425px;height:1px;background:#e4e4e4;"></div>
<div class="a" style="left:75px;top:1070px;width:1px;height:30px;background:#e4e4e4;"></div>
<div class="a" style="left:103.3px;top:1070px;width:1px;height:30px;background:#e4e4e4;"></div>
<div class="a" style="left:232.5px;top:1070px;width:1px;height:30px;background:#e4e4e4;"></div>
<div class="a" style="left:287.5px;top:1070px;width:1px;height:30px;background:#e4e4e4;"></div>
<div class="a" style="left:341.5px;top:1070px;width:1px;height:30px;background:#e4e4e4;"></div>
<div class="a" style="left:395px;top:1070px;width:1px;height:30px;background:#e4e4e4;"></div>
<div class="a" style="left:467.5px;top:1070px;width:1px;height:30px;background:#e4e4e4;"></div>
<div class="a" style="left:548.5px;top:1070px;width:1px;height:30px;background:#e4e4e4;"></div>
<div class="a" style="left:630px;top:1070px;width:1px;height:30px;background:#e4e4e4;"></div>
<div class="a" style="left:711px;top:1070px;width:1px;height:30px;background:#e4e4e4;"></div>
<div class="a" style="left:800.8px;top:1070px;width:1px;height:30px;background:#e4e4e4;"></div>
<div class="a" style="left:891px;top:1070px;width:1px;height:30px;background:#e4e4e4;"></div>
<div class="a" style="left:981px;top:1070px;width:1px;height:30px;background:#e4e4e4;"></div>
<div class="a" style="left:1071px;top:1070px;width:1px;height:30px;background:#e4e4e4;"></div>
<div class="a" style="left:1161px;top:1070px;width:1px;height:30px;background:#e4e4e4;"></div>
<div class="a" style="left:1251px;top:1070px;width:1px;height:30px;background:#e4e4e4;"></div>
<div class="a" style="left:1341px;top:1070px;width:1px;height:30px;background:#e4e4e4;"></div>
<div class="a" style="left:1431px;top:1070px;width:1px;height:30px;background:#e4e4e4;"></div>
<div class="a" style="left:110.80px;top:1078.20px;font-size:12.4px;line-height:16px;color:#4a4d50;-webkit-text-stroke:0.3px currentColor">Recalculated Enro...</div>
<div class="a" style="left:241.00px;top:1078.20px;font-size:12.4px;line-height:16px;color:#32363a;-webkit-text-stroke:0.3px currentColor">CH</div>
<div class="a" style="left:296.00px;top:1078.20px;font-size:12.4px;line-height:16px;color:#32363a;-webkit-text-stroke:0.3px currentColor">RG-1</div>
<div class="a" style="left:350.00px;top:1078.20px;font-size:12.4px;line-height:16px;color:#32363a;-webkit-text-stroke:0.3px currentColor">TG-1</div>
<div class="a" style="left:403.50px;top:1078.20px;font-size:12.4px;line-height:16px;color:#32363a;-webkit-text-stroke:0.3px currentColor">CDE60...</div>
<div class="a" style="right:959.80px;top:1078.20px;font-size:12.4px;line-height:16px;color:#4a4d50;-webkit-text-stroke:0.3px currentColor">-</div>
<div class="a" style="right:878.30px;top:1078.20px;font-size:12.4px;line-height:16px;color:#4a4d50;-webkit-text-stroke:0.3px currentColor">-</div>
<div class="a" style="right:797.30px;top:1078.20px;font-size:12.4px;line-height:16px;color:#4a4d50;-webkit-text-stroke:0.3px currentColor">50.00</div>
<div class="a" style="right:707.20px;top:1078.20px;font-size:12.4px;line-height:16px;color:#4a4d50;-webkit-text-stroke:0.3px currentColor">-</div>
<div class="a" style="right:617.00px;top:1078.20px;font-size:12.4px;line-height:16px;color:#4a4d50;-webkit-text-stroke:0.3px currentColor">0.66</div>
<div class="a" style="right:527.00px;top:1078.20px;font-size:12.4px;line-height:16px;color:#4a4d50;-webkit-text-stroke:0.3px currentColor">0.66</div>
<div class="a" style="right:437.00px;top:1078.20px;font-size:12.4px;line-height:16px;color:#4a4d50;-webkit-text-stroke:0.3px currentColor">0.66</div>
<div class="a" style="right:347.00px;top:1078.20px;font-size:12.4px;line-height:16px;color:#4a4d50;-webkit-text-stroke:0.3px currentColor">0.66</div>
<div class="a" style="right:257.00px;top:1078.20px;font-size:12.4px;line-height:16px;color:#4a4d50;-webkit-text-stroke:0.3px currentColor">0.66</div>
<div class="a" style="right:167.00px;top:1078.20px;font-size:12.4px;line-height:16px;color:#4a4d50;-webkit-text-stroke:0.3px currentColor">0.66</div>
<div class="a" style="right:77.00px;top:1078.20px;font-size:12.4px;line-height:16px;color:#4a4d50;-webkit-text-stroke:0.3px currentColor">0.66</div>
<div class="a" style="right:-13.00px;top:1078.20px;font-size:12.4px;line-height:16px;color:#4a4d50;-webkit-text-stroke:0.3px currentColor">0.66</div>
<div class="a" style="left:41.7px;top:832.5px;width:1px;height:267.5px;background:#e4e4e4;"></div>
<div class="a" style="left:76.5px;top:892.3px;width:196px;height:28.7px;border:1px solid #707070;box-shadow:inset 0 0 0 0.6px rgba(112,112,112,.6)"></div>
</body></html>
